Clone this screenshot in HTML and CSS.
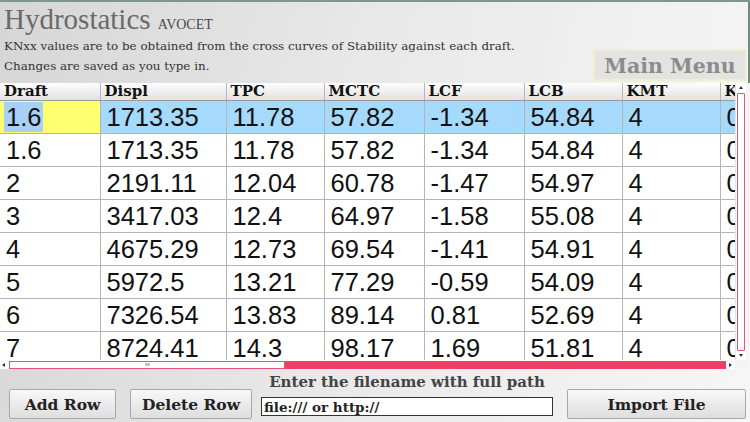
FILE: index.html
```html
<!DOCTYPE html>
<html>
<head>
<meta charset="utf-8">
<link rel="stylesheet" href="styles.css">
</head>
<body>
<div class="page">
  <header class="top">
    <div class="intro">
      <h1 class="title">Hydrostatics <span class="ship">AVOCET</span></h1>
      <p class="note">KNxx values are to be obtained from the cross curves of Stability against each draft.</p>
      <p class="note">Changes are saved as you type in.</p>
    </div>
    <button class="menu">Main Menu</button>
  </header>

  <section class="sheet">
    <div class="view">
      <table class="data">
        <colgroup>
          <col class="c1"><col class="c2"><col class="c3"><col class="c4"><col class="c5"><col class="c6"><col class="c7"><col class="c8">
        </colgroup>
        <thead>
          <tr><th>Draft</th><th>Displ</th><th>TPC</th><th>MCTC</th><th>LCF</th><th>LCB</th><th>KMT</th><th>KN</th></tr>
        </thead>
        <tbody>
          <tr class="sel"><td class="edit"><span class="hl">1.6</span></td><td>1713.35</td><td>11.78</td><td>57.82</td><td>-1.34</td><td>54.84</td><td>4</td><td>0</td></tr>
          <tr><td>1.6</td><td>1713.35</td><td>11.78</td><td>57.82</td><td>-1.34</td><td>54.84</td><td>4</td><td>0</td></tr>
          <tr><td>2</td><td>2191.11</td><td>12.04</td><td>60.78</td><td>-1.47</td><td>54.97</td><td>4</td><td>0</td></tr>
          <tr><td>3</td><td>3417.03</td><td>12.4</td><td>64.97</td><td>-1.58</td><td>55.08</td><td>4</td><td>0</td></tr>
          <tr><td>4</td><td>4675.29</td><td>12.73</td><td>69.54</td><td>-1.41</td><td>54.91</td><td>4</td><td>0</td></tr>
          <tr><td>5</td><td>5972.5</td><td>13.21</td><td>77.29</td><td>-0.59</td><td>54.09</td><td>4</td><td>0</td></tr>
          <tr><td>6</td><td>7326.54</td><td>13.83</td><td>89.14</td><td>0.81</td><td>52.69</td><td>4</td><td>0</td></tr>
          <tr><td>7</td><td>8724.41</td><td>14.3</td><td>98.17</td><td>1.69</td><td>51.81</td><td>4</td><td>0</td></tr>
        </tbody>
      </table>
    </div>
    <div class="vbar">
      <span class="arrow up"></span>
      <span class="vthumb"></span>
      <span class="arrow down"></span>
    </div>
    <div class="hbar">
      <span class="arrow left"></span>
      <span class="hthumb"><span class="grip"></span></span>
      <span class="htrack"></span>
      <span class="arrow right"></span>
    </div>
    <div class="corner"></div>
  </section>

  <footer class="actions">
    <button class="btn add">Add Row</button>
    <button class="btn del">Delete Row</button>
    <div class="file">
      <label class="file-label" for="path">Enter the filename with full path</label>
      <input id="path" class="file-input" type="text" value="file:/// or http://">
    </div>
    <button class="btn import">Import File</button>
  </footer>
</div>
</body>
</html>
```

FILE: styles.css
```css
html, body {
  margin: 0;
  padding: 0;
}
body {
  width: 750px;
  height: 422px;
  overflow: hidden;
  font-family: "Liberation Serif", serif;
}
.page {
  width: 750px;
  height: 422px;
  box-sizing: border-box;
  border-top: 2px solid #7d978d;
  background: linear-gradient(100deg, #d6d6d6 0%, #e8e8e8 45%, #f6f6f6 100%);
  display: flex;
  flex-direction: column;
}
.top {
  height: 81px;
  display: flex;
  justify-content: space-between;
  align-items: flex-end;
  box-sizing: border-box;
  border-right: 2px solid #6f8a80;
  padding: 0 1px 1px 4px;
}
.intro {
  align-self: flex-start;
}
.title {
  margin: 0;
  padding-top: 1px;
  font-weight: normal;
  font-size: 29px;
  line-height: 33px;
  color: #6a6a6a;
}
.ship {
  font-size: 14px;
  line-height: 1;
  color: #4a4a4a;
}
.note {
  margin: 0;
  font-family: "DejaVu Serif", serif;
  font-size: 11.9px;
  line-height: 20px;
  color: #333;
}
.menu {
  width: 154px;
  height: 32px;
  margin-bottom: 1px;
  box-sizing: border-box;
  border: 2px solid #efefcc;
  background: #e3e3e1;
  font-family: "DejaVu Serif", serif;
  font-weight: bold;
  font-size: 20.5px;
  color: #8c8c8c;
  padding: 2px 0 0 0;
  text-align: center;
}

/* sheet */
.sheet {
  width: 746px;
  height: 286px;
  display: grid;
  grid-template-columns: 735px 11px;
  grid-template-rows: 277px 9px;
  background: #fff;
}
.view {
  overflow: hidden;
  background: #fff;
}
.data {
  border-collapse: collapse;
  table-layout: fixed;
  width: 780px;
}
.c1 { width: 100px; }
.c2 { width: 126px; }
.c3 { width: 98px; }
.c4 { width: 100px; }
.c5 { width: 100px; }
.c6 { width: 98px; }
.c7 { width: 98px; }
.c8 { width: 60px; }
.data th {
  height: 17px;
  padding: 0 0 0 4px;
  text-align: left;
  font-family: "DejaVu Serif", serif;
  font-weight: bold;
  font-size: 15px;
  line-height: 17px;
  color: #111;
  background: linear-gradient(#fdfdfd, #e2e2e2);
  border-right: 1px solid #b8b8b8;
  border-bottom: 1px solid #9a9a9a;
  overflow: hidden;
  white-space: nowrap;
}
.data td {
  height: 32px;
  padding: 0 0 0 6px;
  font-family: "Liberation Sans", Arial, sans-serif;
  font-size: 25.5px;
  line-height: 32px;
  color: #111;
  border-right: 1px solid #b4b4b4;
  border-bottom: 1px solid #b4b4b4;
  overflow: hidden;
  white-space: nowrap;
}
.data tr.sel td {
  background: #a6dafc;
}
.data tr.sel td.edit {
  background: #ffff70;
  padding-left: 4px;
}
.hl {
  background: #a8cff5;
  padding: 1px 2px;
}

/* scrollbars */
.vbar {
  display: flex;
  flex-direction: column;
  align-items: center;
  background: #fff;
  border-left: 1px solid #e6e6e6;
}
.vthumb {
  flex: 1;
  width: 6px;
  border: 1px solid #e4547a;
  border-radius: 1px;
  margin: 1px 0;
  background: #fff;
}
.hbar {
  display: flex;
  align-items: center;
  background: #fff;
}
.hthumb {
  width: 274px;
  height: 6px;
  border: 1px solid #e4547a;
  background: #fff;
  margin-left: 1px;
  display: flex;
  justify-content: center;
  align-items: center;
}
.grip {
  width: 5px;
  height: 3px;
  background: #c4c4c4;
}
.htrack {
  flex: 1;
  height: 8px;
  background: #f23d66;
}
.corner {
  background: #f4f4f4;
}
.arrow {
  width: 0;
  height: 0;
  flex: none;
}
.arrow.up {
  margin-top: 3px;
  border-left: 2px solid transparent;
  border-right: 2px solid transparent;
  border-bottom: 3px solid #333;
  margin-bottom: 3px;
}
.arrow.down {
  margin-bottom: 3px;
  margin-top: 2px;
  border-left: 2px solid transparent;
  border-right: 2px solid transparent;
  border-top: 3px solid #333;
}
.arrow.left {
  margin: 0 3px 0 2px;
  border-top: 2px solid transparent;
  border-bottom: 2px solid transparent;
  border-right: 3px solid #333;
}
.arrow.right {
  margin: 0 3px 0 3px;
  border-top: 2px solid transparent;
  border-bottom: 2px solid transparent;
  border-left: 3px solid #333;
}

/* footer */
.actions {
  flex: 1;
  display: flex;
  align-items: flex-end;
  padding: 0 4px 3px 9px;
}
.btn {
  height: 30px;
  box-sizing: border-box;
  border: 1px solid #a8a8a8;
  border-radius: 2px;
  background: linear-gradient(#f8f8f8, #dedede);
  font-family: "DejaVu Serif", serif;
  font-weight: bold;
  font-size: 15.5px;
  color: #222;
  padding: 0;
}
.add { width: 107px; }
.del { width: 122px; margin-left: 14px; }
.import { width: 179px; margin-left: 14px; }
.file {
  display: flex;
  flex-direction: column;
  align-items: center;
  margin-left: 9px;
  margin-bottom: 3px;
}
.file-label {
  font-family: "DejaVu Serif", serif;
  font-weight: bold;
  font-size: 15px;
  line-height: 20px;
  color: #444;
  margin-bottom: 5px;
}
.file-input {
  width: 292px;
  height: 19px;
  box-sizing: border-box;
  border: 1px solid #333;
  background: #fff;
  padding: 0 2px;
  font-family: "DejaVu Serif", serif;
  font-weight: bold;
  font-size: 13.5px;
  color: #222;
}
```
